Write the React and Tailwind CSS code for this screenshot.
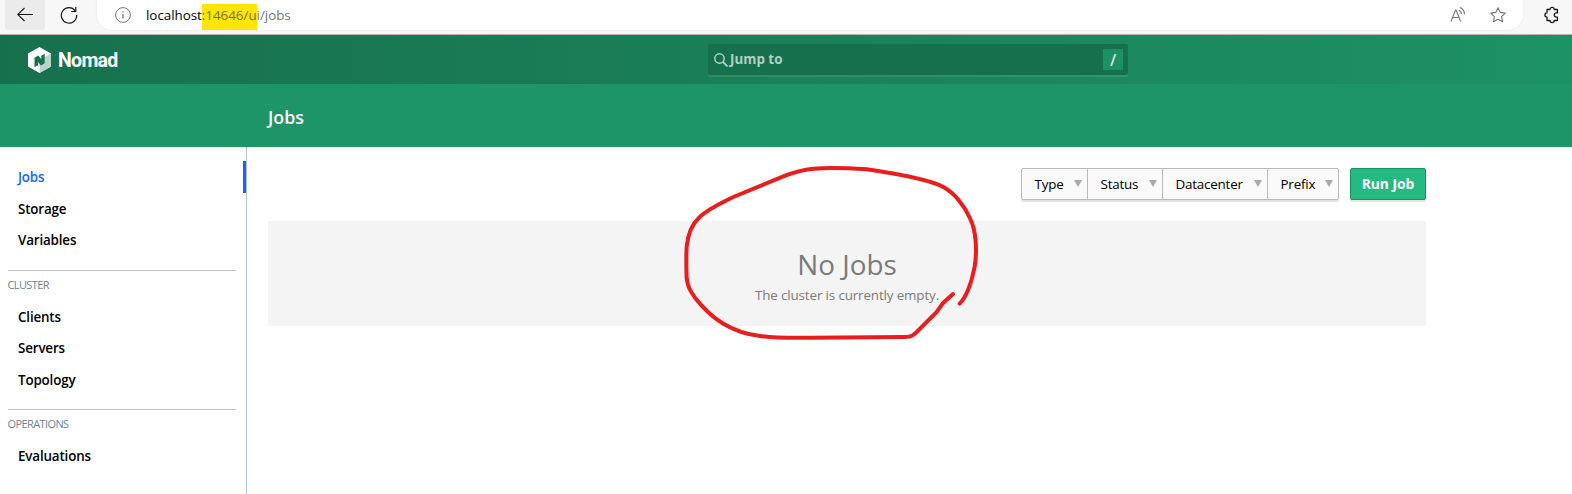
const T = ({ children, className }) => (
  <span className={`inline-block whitespace-nowrap ${className}`}>{children}</span>
);

function Item({ label, active }) {
  return (
    <li className={`relative flex items-center pl-[18px] ${active ? "h-8" : "h-[31.5px]"}`}>
      <T className={`text-[13.4px] font-semibold tracking-[-0.012em] ${active ? "text-[#1563ff]" : "text-black"}`}>{label}</T>
      {active && <span className="absolute right-0 top-0 h-8 w-[3px] bg-[#1563ff]" />}
    </li>
  );
}

function Section({ label, items }) {
  return (
    <section className="mt-[13.5px]">
      <div className="ml-2 mr-[10px] h-px bg-[#bac1cc]" />
      <h3 className="mt-[6px] flex h-[17px] items-center pl-[7.5px] text-[11px] tracking-[-0.055em] text-[#6f7f99]">{label}</h3>
      <ul className="mt-[7.5px]">
        {items.map((name) => <Item key={name} label={name} />)}
      </ul>
    </section>
  );
}

function Filter({ label, width, last }) {
  return (
    <button className={`flex h-full items-center justify-between pl-[12.5px] pr-[5px] ${width} ${last ? "" : "border-r border-[#bababa]"}`}>
      <T className="text-[13.4px] tracking-[-0.015em] text-black">{label}</T>
      <svg className="mb-0.5 h-[7px] w-2" viewBox="0 0 8 7"><path d="M0 0H8L4 7Z" fill="#aaa" /></svg>
    </button>
  );
}

function NomadLogo() {
  return (
    <svg className="ml-7 h-[26px] w-[23px]" viewBox="0 0 23 26">
      <path d="M11.5 0L23 6.5v13L11.5 26 0 19.500V6.500Z" fill="#fff" />
      <path d="M23 6.500v13L11.5 26V13Z" fill="#b9d4c9" />
      <path d="M6.500 10.800l3.800-2.200 3 3.300V8.800L16.700 6.800v9.400l-3.800 2.200-2.900-3.300v3.200L6.500 20.200Z" fill="#17704d" />
    </svg>
  );
}

export default function App() {
  return (
    <div className="relative flex h-[494px] w-[1572px] flex-col overflow-hidden bg-white font-['Open_Sans','Noto_Sans',sans-serif]">
      <div className="flex h-[35px] shrink-0 items-start border-b border-[#b5b5b5] bg-[#f7f7f7]">
        <div className="ml-[5px] flex h-[30px] w-10 items-center justify-center rounded-b-[4px] bg-[#ebebeb]">
          <svg className="h-4 w-4" viewBox="0 0 16 16" fill="none" stroke="#1b1b1b" strokeWidth="1.1"><path d="M16 7.500H.7M7.500 1L.7 7.500l6.800 6.500" /></svg>
        </div>
        <svg className="ml-[15px] mt-[6px] h-[18px] w-[18px]" viewBox="0 0 18 18" fill="none" stroke="#1b1b1b" strokeWidth="1.2"><path d="M15.200 4.800A7.700 7.700 0 1 0 16.700 9M15.800 1v4.500h-4.600" /></svg>
        <div className="ml-[19px] flex h-[30px] w-[1426px] items-center rounded-b-[15px] bg-white shadow-[0_0_3px_#0001]">
          <svg className="ml-[18px] h-4 w-4" viewBox="0 0 16 16" fill="none" stroke="#757575"><circle cx="8" cy="8" r="7.4" /><path d="M8 7v4.500M8 4.200v1.300" strokeWidth="1.3" /></svg>
          <div className="ml-[15px] flex items-center text-[13.4px] tracking-[-0.002em]">
            <T className="text-black">localhost</T>
            <span className="mt-[4px] flex h-[26px] items-center bg-[#ffe600] pb-[4px]"><T className="text-[#757000]">:14646/u</T></span>
            <T className="text-[#757575]">i/jobs</T>
          </div>
          <svg className="ml-auto h-4 w-4" viewBox="0 0 16 16" fill="none" stroke="#757575" strokeWidth="1.1"><path d="M1 14.500L5.500 3h.6l4.500 11.500M2.600 10.500H9M8.800 3.200c1.700.7 2.600 2.200 2.600 4M9.800.6c2.900 1 4.600 3.400 4.600 6.600" /></svg>
          <svg className="ml-6 mr-[17px] h-4 w-4" viewBox="0 0 16 16" fill="none" stroke="#757575" strokeWidth="1.1" strokeLinejoin="round"><path d="M8 .8l2.200 4.600 5 .7-3.600 3.500.9 5.100L8 12.300l-4.500 2.400.9-5.100L.8 6.100l5-.7Z" /></svg>
        </div>
        <svg className="ml-[21px] mt-[6px] h-[18px] w-[15px]" viewBox="0 0 15 18" fill="none" stroke="#1b1b1b" strokeWidth="1.3" strokeLinejoin="round"><path d="M3 3.500h3a2.100 2.100 0 0 1 4.200 0h3.200v3.400h-1a2.100 2.100 0 0 0 0 4.200h1v3.400h-3.200a2.100 2.100 0 0 1-4.200 0H3v-3.400a2.100 2.100 0 0 1 0-4.200Z" /></svg>
      </div>

      <header className="flex h-[49px] shrink-0 items-center bg-linear-to-r from-[#17704d] to-[#1d9264]">
        <NomadLogo />
        <div className="ml-[7px] w-[60px] pt-[2px]">
          <T className="text-[19.5px] font-bold tracking-[-0.035em] text-white font-['Roboto',sans-serif]">Nomad</T>
        </div>
        <div className="ml-[590px] flex h-[31px] w-[420px] items-center rounded-[2px] bg-[#17704d] pr-[5px] shadow-[0_2px_0_#ffffff18]">
          <svg className="ml-[6px] h-[14px] w-[14px]" viewBox="0 0 14 14" fill="none" stroke="#b3d1c5" strokeWidth="1.5"><circle cx="5.500" cy="5.500" r="4.700" /><path d="M9 9l4.500 4.500" strokeWidth="1.8" /></svg>
          <T className="ml-[2px] text-[13.4px] font-bold text-[#b0d0c3]">Jump to</T>
          <kbd className="ml-auto flex h-[21px] w-5 items-center justify-center bg-[#1d9064] font-['Open_Sans',sans-serif] text-[16px] font-semibold text-[#cfe6dc]">/</kbd>
        </div>
      </header>

      <div className="flex h-[63px] shrink-0 items-center bg-[#1e9567] pl-[268px] pt-[3px]">
        <T className="text-[17.8px] font-semibold text-white">Jobs</T>
      </div>

      <div className="flex min-h-0 flex-1">
        <nav className="w-[247px] shrink-0 border-r border-[#bac1cc] pt-[14px]">
          <ul>
            <Item label="Jobs" active />
            <Item label="Storage" />
            <Item label="Variables" />
          </ul>
          <Section label="CLUSTER" items={["Clients", "Servers", "Topology"]} />
          <Section label="OPERATIONS" items={["Evaluations"]} />
        </nav>
        <main className="ml-[21px] w-[1158px] pt-[21px]">
          <div className="flex h-8 justify-end">
            <div className="flex w-[318px] rounded-[2px] border border-[#bababa] bg-[#fafafa] shadow-[0_2px_0_#0000001a]">
              <Filter label="Type" width="w-[66px]" />
              <Filter label="Status" width="w-[75px]" />
              <Filter label="Datacenter" width="w-[105px]" />
              <Filter label="Prefix" width="w-[70px]" last />
            </div>
            <button className="ml-[11px] flex w-[76px] items-center justify-center rounded-[2px] border border-[#1d9064] bg-[#25ba81] shadow-[0_2px_0_#0000001a]">
              <T className="text-[13.8px] font-bold text-white">Run Job</T>
            </button>
          </div>
          <div className="mt-[21px] flex h-[105px] flex-col items-center rounded-[2px] bg-[#f4f4f4] pt-[25px] text-[#7a7a7a]">
            <T className="text-[27.8px] leading-9">No Jobs</T>
            <T className="mt-[3px] text-[13.4px] leading-5 tracking-[-0.01em]">The cluster is currently empty.</T>
          </div>
        </main>
      </div>

      <svg className="absolute left-[660px] top-[150px] h-[200px] w-[340px]" viewBox="0 0 1020 600" fill="none" stroke="#ea1c1c" strokeWidth="12" strokeLinecap="round" strokeLinejoin="round">
        <path d="M899 461C920 440 934 400 944 350C952 300 948 240 930 205C915 170 885 130 850 111C810 90 715 72 620 58C560 54 510 52 460 56C420 60 400 67 370 79L220 141C180 160 140 180 117 203C95 223 84 250 80 290C78 330 79 360 80 385C83 410 90 422 105 443C130 475 155 500 190 521C230 545 260 553 300 558C350 564 400 564 450 563L735 561C755 561 762 555 774 542L829 487L850 458L879 432" />
      </svg>
    </div>
  );
}
